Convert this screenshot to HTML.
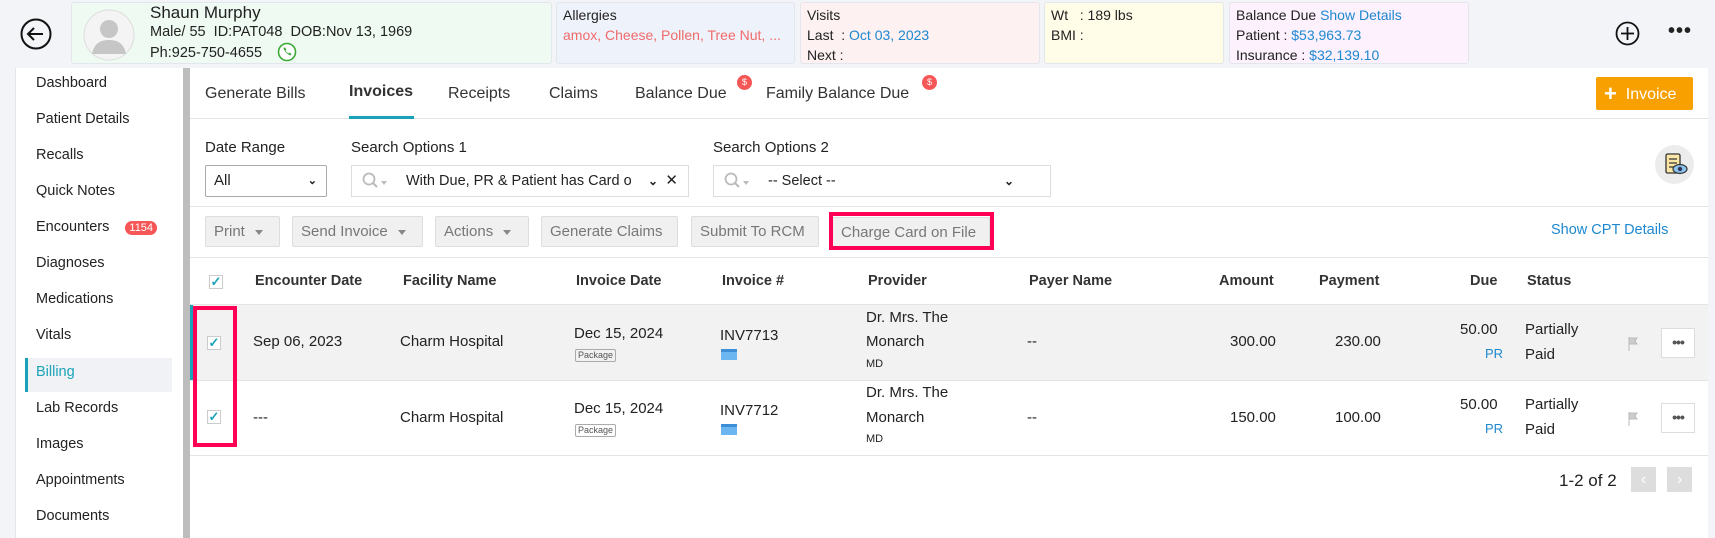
<!DOCTYPE html>
<html><head><meta charset="utf-8"><style>
*{box-sizing:border-box;margin:0;padding:0}
body{width:1715px;height:531px;overflow:hidden;background:#f3f4f7;font-family:"Liberation Sans",sans-serif;color:#222;position:relative;font-size:15px}
.a{position:absolute;white-space:nowrap}
.card{position:absolute;top:2px;height:62px;border:1px solid #e3e6ea;border-radius:3px;font-size:14px;line-height:20px;padding:2px 6px}
.blue{color:#1e88d0}
.side div{position:absolute;left:36px;font-size:14.5px;color:#222}
.btn{position:absolute;top:216px;height:31px;background:#f0f0f0;border:1px solid #ddd;border-radius:2px;color:#777;font-size:15px;line-height:29px;padding-left:8px}
.car{display:inline-block;width:0;height:0;border-left:4px solid transparent;border-right:4px solid transparent;border-top:5px solid #888;vertical-align:middle;margin-left:10px}
.th{position:absolute;top:273px;font-weight:bold;font-size:14.5px;color:#333}
.td{position:absolute;font-size:15px}
.cb{position:absolute;width:14px;height:14px;border:1px solid #ccc;background:#fff;color:#1aa3b8;font-size:13px;line-height:12px;text-align:center;font-weight:bold}
.pkg{position:absolute;font-size:9px;border:1px solid #aaa;border-radius:2px;padding:0 2px;color:#555;line-height:11px}
.ccard{position:absolute;width:16px;height:11px;background:#6bb6f0;border-top:3px solid #3c8fd6}
.dots{position:absolute;width:34px;height:30px;border:1px solid #ddd;background:#fff;text-align:center;font-size:14px;line-height:26px;color:#555;font-weight:bold;letter-spacing:-1px}
</style></head><body>
<svg class="a" style="left:20px;top:18px" width="32" height="32" viewBox="0 0 32 32"><circle cx="16" cy="16" r="14.5" fill="none" stroke="#111" stroke-width="2"/><path d="M23 16H9M14 10l-6 6 6 6" fill="none" stroke="#111" stroke-width="2"/></svg>
<div class="card" style="left:71px;width:481px;background:#eefaf2"></div>
<svg class="a" style="left:83px;top:9px" width="52" height="52"><circle cx="26" cy="26" r="25" fill="#f4f4f4" stroke="#ddd"/><circle cx="26" cy="20" r="9" fill="#c6c6c6"/><path d="M9 45c2-11 9-14 17-14s15 3 17 14z" fill="#c6c6c6"/></svg>
<div class="a" style="left:150px;top:3px;font-size:17px">Shaun Murphy</div>
<div class="a" style="left:150px;top:24px;font-size:14.5px">Male/ 55 &nbsp;ID:PAT048 &nbsp;DOB:Nov 13, 1969</div>
<div class="a" style="left:150px;top:45px;font-size:14.5px">Ph:925-750-4655</div>
<svg class="a" style="left:277px;top:42px" width="20" height="20"><circle cx="10" cy="10" r="8.5" fill="#fff" stroke="#3aaa35" stroke-width="1.6"/><path d="M6.5 6c1 3 3 6 7 7.5l1-1.5-2-1.5-1 1c-1.2-.6-2.4-1.8-3-3l1-1-1.5-2z" fill="#3aaa35"/></svg>
<div class="card" style="left:556px;width:239px;background:#eef3fb">Allergies<br><span style="color:#f06a6a">amox, Cheese, Pollen, Tree Nut, ...</span></div>
<div class="card" style="left:800px;width:240px;background:#fdf1f1">Visits<br>Last &nbsp;: <span class="blue">Oct 03, 2023</span><br>Next :</div>
<div class="card" style="left:1044px;width:180px;background:#fffde8">Wt &nbsp;&nbsp;: 189 lbs<br>BMI :</div>
<div class="card" style="left:1229px;width:240px;background:#fcf1fc">Balance Due <span class="blue">Show Details</span><br>Patient : <span class="blue">$53,963.73</span><br>Insurance : <span class="blue">$32,139.10</span></div>
<svg class="a" style="left:1615px;top:21px" width="25" height="25"><circle cx="12.5" cy="12.5" r="11" fill="none" stroke="#111" stroke-width="1.8"/><path d="M12.5 6v13M6 12.5h13" stroke="#111" stroke-width="1.8"/></svg>
<div class="a" style="left:1668px;top:20px;font-size:20px;font-weight:bold;letter-spacing:1px">•••</div>
<div class="a" style="left:15px;top:68px;width:168px;height:470px;background:#fff;border-left:1px solid #e5e5e5"></div>
<div class="a" style="left:183px;top:68px;width:7px;height:470px;background:#bdbdbd"></div>
<div class="a" style="left:25px;top:358px;width:147px;height:34px;background:#f0f2f5;border-left:3px solid #1aa3b8"></div>
<div class="side">
<div style="top:75px">Dashboard</div><div style="top:111px">Patient Details</div><div style="top:147px">Recalls</div><div style="top:183px">Quick Notes</div>
<div style="top:219px">Encounters <span style="background:#f55656;color:#fff;font-size:11px;border-radius:9px;padding:1px 4px;margin-left:12px">1154</span></div>
<div style="top:255px">Diagnoses</div><div style="top:291px">Medications</div><div style="top:327px">Vitals</div>
<div style="top:364px;color:#1aa3b8">Billing</div><div style="top:400px">Lab Records</div><div style="top:436px">Images</div><div style="top:472px">Appointments</div><div style="top:508px">Documents</div>
</div>
<div class="a" style="left:190px;top:68px;width:1518px;height:470px;background:#fff"></div>
<div class="a" style="left:190px;top:118px;width:1518px;height:1px;background:#e4e4e4"></div>
<div class="a" style="left:205px;top:85px;font-size:16px;color:#333">Generate Bills</div>
<div class="a" style="left:349px;top:83px;font-size:16px;font-weight:bold;color:#333">Invoices</div>
<div class="a" style="left:349px;top:116px;width:65px;height:3px;background:#1aa3b8"></div>
<div class="a" style="left:448px;top:85px;font-size:16px;color:#333">Receipts</div>
<div class="a" style="left:549px;top:85px;font-size:16px;color:#333">Claims</div>
<div class="a" style="left:635px;top:85px;font-size:16px;color:#333">Balance Due</div>
<div class="a" style="left:737px;top:75px;width:15px;height:15px;border-radius:50%;background:#f55656;color:#fff;font-size:9px;text-align:center;line-height:15px">$</div>
<div class="a" style="left:766px;top:85px;font-size:16px;color:#333">Family Balance Due</div>
<div class="a" style="left:922px;top:75px;width:15px;height:15px;border-radius:50%;background:#f55656;color:#fff;font-size:9px;text-align:center;line-height:15px">$</div>
<div class="a" style="left:1596px;top:77px;width:97px;height:33px;background:#f7a000;border-radius:2px;color:#fff;font-size:16px;line-height:33px;padding-left:8px"><b style="font-size:22px;vertical-align:-2px">+</b>&nbsp; Invoice</div>
<div class="a" style="left:205px;top:139px;font-size:15px">Date Range</div>
<div class="a" style="left:351px;top:139px;font-size:15px">Search Options 1</div>
<div class="a" style="left:713px;top:139px;font-size:15px">Search Options 2</div>
<div class="a" style="left:205px;top:165px;width:122px;height:32px;border:1px solid #aaa;border-radius:2px;font-size:15px;line-height:30px;padding-left:8px">All<span style="position:absolute;right:9px;font-size:11px;font-weight:bold">&#8964;</span></div>
<div class="a" style="left:351px;top:165px;width:338px;height:32px;border:1px solid #ddd;font-size:14.5px;line-height:30px;padding-left:54px;color:#222">With Due, PR &amp; Patient has Card o<span style="position:absolute;right:30px;font-size:12px;font-weight:bold">&#8964;</span><span style="position:absolute;right:10px;font-size:15px">✕</span></div>
<svg class="a" style="left:362px;top:172px" width="28" height="18"><circle cx="7" cy="7" r="5.5" fill="none" stroke="#bbb" stroke-width="1.8"/><path d="M11 11l4 4" stroke="#bbb" stroke-width="2"/><path d="M19 9h6l-3 4z" fill="#bbb"/></svg>
<div class="a" style="left:713px;top:165px;width:338px;height:32px;border:1px solid #ddd;font-size:14.5px;line-height:30px;padding-left:54px">-- Select --<span style="position:absolute;right:36px;font-size:12px;font-weight:bold">&#8964;</span></div>
<svg class="a" style="left:724px;top:172px" width="28" height="18"><circle cx="7" cy="7" r="5.5" fill="none" stroke="#bbb" stroke-width="1.8"/><path d="M11 11l4 4" stroke="#bbb" stroke-width="2"/><path d="M19 9h6l-3 4z" fill="#bbb"/></svg>
<div class="a" style="left:1655px;top:145px;width:39px;height:39px;border-radius:50%;background:#ececec"></div>
<svg class="a" style="left:1664px;top:153px" width="24" height="24"><rect x="2" y="1" width="14" height="19" rx="1.5" fill="#fbe6a6" stroke="#333" stroke-width="1.3"/><path d="M5 6h8M5 10h8M5 14h5" stroke="#333" stroke-width="1.2"/><ellipse cx="16" cy="16" rx="7" ry="4.5" fill="#8cc4f0" stroke="#333" stroke-width="1.2"/><circle cx="16" cy="16" r="2.2" fill="#335"/></svg>
<div class="a" style="left:190px;top:206px;width:1518px;height:1px;background:#e4e4e4"></div>
<div class="btn" style="left:205px;width:75px">Print<span class="car"></span></div>
<div class="btn" style="left:292px;width:131px">Send Invoice<span class="car"></span></div>
<div class="btn" style="left:435px;width:94px">Actions<span class="car"></span></div>
<div class="btn" style="left:541px;width:137px">Generate Claims</div>
<div class="btn" style="left:691px;width:128px">Submit To RCM</div>
<div class="btn" style="left:832px;width:158px;top:217px;height:30px">Charge Card on File</div>
<div class="a" style="left:829px;top:212px;width:165px;height:38px;border:4px solid #ff0055"></div>
<div class="a" style="left:1551px;top:222px;font-size:14.5px;color:#1e88d0">Show CPT Details</div>
<div class="a" style="left:190px;top:257px;width:1518px;height:1px;background:#e4e4e4"></div>
<div class="cb" style="left:209px;top:275px">✓</div>
<div class="th" style="left:255px">Encounter Date</div>
<div class="th" style="left:403px">Facility Name</div>
<div class="th" style="left:576px">Invoice Date</div>
<div class="th" style="left:722px">Invoice #</div>
<div class="th" style="left:868px">Provider</div>
<div class="th" style="left:1029px">Payer Name</div>
<div class="th" style="left:1219px">Amount</div>
<div class="th" style="left:1319px">Payment</div>
<div class="th" style="left:1470px">Due</div>
<div class="th" style="left:1527px">Status</div>
<div class="a" style="left:190px;top:304px;width:1518px;height:1px;background:#e4e4e4"></div>
<div class="a" style="left:190px;top:305px;width:1518px;height:75px;background:#f2f2f2;border-left:3px solid #1aa3b8"></div>
<div class="a" style="left:190px;top:380px;width:1518px;height:1px;background:#e4e4e4"></div>
<div class="a" style="left:190px;top:455px;width:1518px;height:1px;background:#e4e4e4"></div>
<div class="cb" style="left:207px;top:336px">✓</div>
<div class="td" style="left:253px;top:333px">Sep 06, 2023</div>
<div class="td" style="left:400px;top:333px">Charm Hospital</div>
<div class="td" style="left:574px;top:325px">Dec 15, 2024</div>
<div class="pkg" style="left:575px;top:349px">Package</div>
<div class="td" style="left:720px;top:327px">INV7713</div>
<div class="ccard" style="left:721px;top:349px"></div>
<div class="td" style="left:866px;top:309px">Dr. Mrs. The</div>
<div class="td" style="left:866px;top:333px">Monarch</div>
<div class="td" style="left:866px;top:358px;font-size:11px">MD</div>
<div class="td" style="left:1027px;top:333px">--</div>
<div class="td" style="left:1230px;top:333px">300.00</div>
<div class="td" style="left:1335px;top:333px">230.00</div>
<div class="td" style="left:1460px;top:321px">50.00</div>
<div class="td" style="left:1485px;top:346px;color:#1e88d0;font-size:13px">PR</div>
<div class="td" style="left:1525px;top:321px">Partially</div>
<div class="td" style="left:1525px;top:346px">Paid</div>
<svg class="a" style="left:1628px;top:337px" width="12" height="14"><path d="M1 0v14M1 1h8l-2 3 2 3H1" fill="#ccc" stroke="#bbb"/></svg>
<div class="dots" style="left:1661px;top:328px">•••</div>
<div class="cb" style="left:207px;top:410px">✓</div>
<div class="td" style="left:253px;top:409px">---</div>
<div class="td" style="left:400px;top:409px">Charm Hospital</div>
<div class="td" style="left:574px;top:400px">Dec 15, 2024</div>
<div class="pkg" style="left:575px;top:424px">Package</div>
<div class="td" style="left:720px;top:402px">INV7712</div>
<div class="ccard" style="left:721px;top:424px"></div>
<div class="td" style="left:866px;top:384px">Dr. Mrs. The</div>
<div class="td" style="left:866px;top:409px">Monarch</div>
<div class="td" style="left:866px;top:433px;font-size:11px">MD</div>
<div class="td" style="left:1027px;top:409px">--</div>
<div class="td" style="left:1230px;top:409px">150.00</div>
<div class="td" style="left:1335px;top:409px">100.00</div>
<div class="td" style="left:1460px;top:396px">50.00</div>
<div class="td" style="left:1485px;top:421px;color:#1e88d0;font-size:13px">PR</div>
<div class="td" style="left:1525px;top:396px">Partially</div>
<div class="td" style="left:1525px;top:421px">Paid</div>
<svg class="a" style="left:1628px;top:412px" width="12" height="14"><path d="M1 0v14M1 1h8l-2 3 2 3H1" fill="#ccc" stroke="#bbb"/></svg>
<div class="dots" style="left:1661px;top:403px">•••</div>
<div class="a" style="left:193px;top:306px;width:44px;height:141px;border:4px solid #ff0055"></div>
<div class="a" style="left:1559px;top:471px;font-size:17px">1-2 of 2</div>
<div class="a" style="left:1631px;top:467px;width:25px;height:25px;background:#ddd;color:#fff;text-align:center;line-height:25px;font-size:16px">&#8249;</div>
<div class="a" style="left:1667px;top:467px;width:25px;height:25px;background:#ddd;color:#fff;text-align:center;line-height:25px;font-size:16px">&#8250;</div>
</body></html>
